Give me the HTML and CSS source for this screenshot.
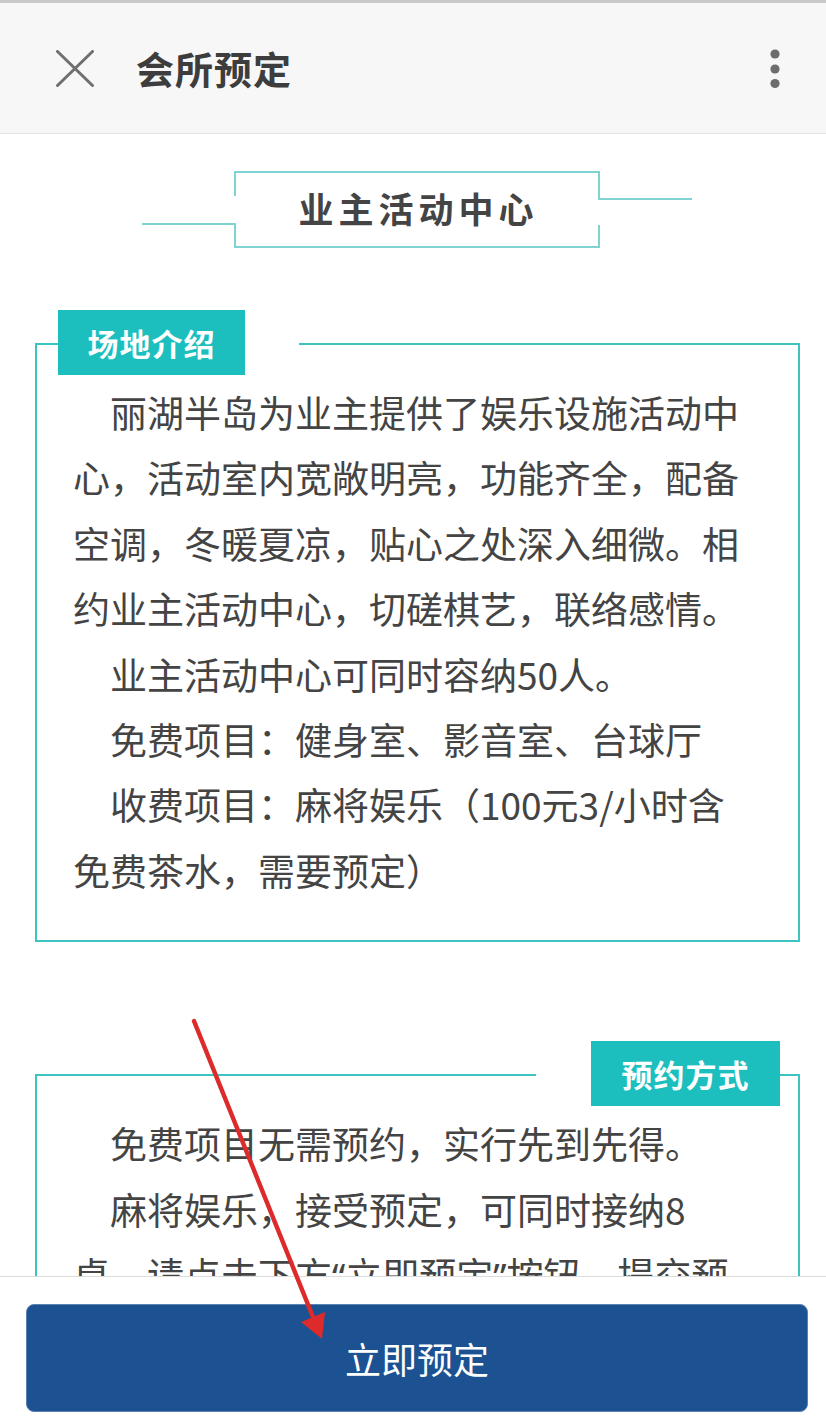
FILE: index.html
```html
<!DOCTYPE html>
<html lang="zh-CN">
<head>
<meta charset="utf-8">
<title>会所预定</title>
<link rel="stylesheet" href="styles.css">
</head>
<body>
<div class="topstrip"></div>
<header class="header">
  <svg class="close" width="38" height="37" viewBox="0 0 38 37"><path d="M1.5 1.5 L36.5 35.5 M36.5 1.5 L1.5 35.5" stroke="#6f6f6f" stroke-width="3" stroke-linecap="round" fill="none"/></svg>
  <h1 class="htitle">会所预定</h1>
  <svg class="more" width="12" height="40" viewBox="0 0 12 40"><circle cx="6" cy="5" r="4.6" fill="#6d6d6d"/><circle cx="6" cy="20" r="4.6" fill="#6d6d6d"/><circle cx="6" cy="34.5" r="4.6" fill="#6d6d6d"/></svg>
</header>

<main class="main">
  <div class="title-row">
    <div class="tline tline-left"></div>
    <div class="tbox">业主活动中心</div>
    <div class="tline tline-right"></div>
  </div>

  <section class="card card-first">
    <div class="card-head">
      <div class="seg seg-left seg-short"></div>
      <div class="label">场地介绍</div>
      <div class="gap"></div>
      <div class="seg seg-right seg-grow"></div>
    </div>
    <div class="card-body">
      <p>丽湖半岛为业主提供了娱乐设施活动中心，活动室内宽敞明亮，功能齐全，配备空调，冬暖夏凉，贴心之处深入细微。相约业主活动中心，切磋棋艺，联络感情。</p>
      <p>业主活动中心可同时容纳50人。</p>
      <p>免费项目：健身室、影音室、台球厅</p>
      <p>收费项目：麻将娱乐（100元3/小时含免费茶水，需要预定）</p>
    </div>
  </section>

  <section class="card card-second">
    <div class="card-head">
      <div class="seg seg-left seg-grow"></div>
      <div class="gap gap2"></div>
      <div class="label label2">预约方式</div>
      <div class="seg seg-right seg-short2"></div>
    </div>
    <div class="card-body">
      <p>免费项目无需预约，实行先到先得。</p>
      <p>麻将娱乐，接受预定，可同时接纳8桌，请点击下方<span class="q">“</span>立即预定<span class="q">”</span>按钮，提交预定申请，工作人员将尽快与您联系确认。</p>
    </div>
  </section>
</main>

<footer class="footer">
  <button class="book">立即预定</button>
</footer>

<svg class="arrow" width="826" height="1428" viewBox="0 0 826 1428">
  <line x1="194" y1="1021" x2="313" y2="1317" stroke="#dd2a2a" stroke-width="4.5" stroke-linecap="round"/>
  <polygon points="301,1322 325,1312 322,1339" fill="#dd2a2a"/>
</svg>
</body>
</html>
```
FILE: styles.css
```css
html, body {
  margin: 0;
  padding: 0;
}
body {
  width: 826px;
  min-height: 1428px;
  background: #ffffff;
  font-family: "Noto Sans CJK SC", "Noto Sans", sans-serif;
  color: #444444;
  position: relative;
  overflow: hidden;
}
.topstrip {
  height: 3px;
  background: #c9c9c9;
}
.header {
  height: 131px;
  background: #f7f7f7;
  border-bottom: 1px solid #e2e2e2;
  display: flex;
  align-items: center;
  padding-left: 56px;
  padding-right: 45px;
  box-sizing: border-box;
}
.close {
  flex: none;
  margin-top: 1px;
}
.htitle {
  margin: 0 0 0 42px;
  font-size: 38px;
  font-weight: 700;
  color: #3d3d3d;
  line-height: 1;
  letter-spacing: 1px;
  flex: 1;
}
.more {
  flex: none;
  margin-top: 2px;
}

.main {
  padding-bottom: 200px;
}

.title-row {
  display: flex;
  justify-content: center;
  padding-left: 8px;
  margin-top: 37px;
}
.tline {
  width: 92px;
  height: 2px;
  background: #7fd4d1;
  flex: none;
}
.tline-left { margin-top: 52px; }
.tline-right { margin-top: 27px; }
.tbox {
  width: 366px;
  height: 77px;
  box-sizing: border-box;
  border-top: 2px solid #7fd4d1;
  border-bottom: 2px solid #7fd4d1;
  background:
    linear-gradient(#7fd4d1, #7fd4d1) left top / 2px 23px no-repeat,
    linear-gradient(#7fd4d1, #7fd4d1) left bottom / 2px 23px no-repeat,
    linear-gradient(#7fd4d1, #7fd4d1) right top / 2px 27px no-repeat,
    linear-gradient(#7fd4d1, #7fd4d1) right bottom / 2px 21px no-repeat;
  display: flex;
  align-items: center;
  justify-content: center;
  font-size: 35px;
  font-weight: 700;
  letter-spacing: 5px;
  padding-left: 3px;
  padding-bottom: 5px;
  color: #444444;
}

.card {
  width: 765px;
  margin-left: 35px;
}
.card-first { margin-top: 62px; }
.card-second { margin-top: 99px; }

.card-head {
  display: flex;
  height: 65px;
}
.seg {
  height: 32px;
  align-self: flex-end;
  box-sizing: border-box;
  border-top: 2px solid #3cc4c2;
}
.seg-left { border-left: 2px solid #3cc4c2; }
.seg-right { border-right: 2px solid #3cc4c2; }
.seg-short { width: 23px; flex: none; }
.seg-short2 { width: 20px; flex: none; }
.seg-grow { flex: 1; }
.gap { width: 54px; flex: none; }
.gap2 { width: 55px; }
.label {
  width: 187px;
  flex: none;
  height: 65px;
  background: #1cbfbe;
  color: #ffffff;
  font-size: 31px;
  font-weight: 700;
  line-height: 65px;
  text-align: center;
  letter-spacing: 1px;
}
.label2 { width: 189px; }
.card-body {
  border: 2px solid #3cc4c2;
  border-top: none;
  padding: 5px 45px 37px 36px;
  font-size: 37px;
  line-height: 65.4px;
  color: #444444;
}
.card-body p {
  margin: 0;
  text-indent: 1em;
}
.q {
  font-family: "Noto Sans", "DejaVu Sans", sans-serif;
}

.footer {
  position: fixed;
  left: 0;
  bottom: 0;
  width: 826px;
  height: 152px;
  box-sizing: border-box;
  background: #ffffff;
  border-top: 1px solid #dcdcdc;
  padding: 27px 18px 16px 26px;
  z-index: 5;
}
.book {
  display: block;
  width: 782px;
  height: 108px;
  margin: 0;
  border: 1px solid #5a82b3;
  border-radius: 8px;
  background: #1c5291;
  color: #ffffff;
  font-family: "Noto Sans CJK SC", "Noto Sans", sans-serif;
  font-size: 36px;
  font-weight: 400;
  letter-spacing: 0;
  padding: 0;
}

.arrow {
  position: absolute;
  left: 0;
  top: 0;
  z-index: 10;
  pointer-events: none;
}
```
